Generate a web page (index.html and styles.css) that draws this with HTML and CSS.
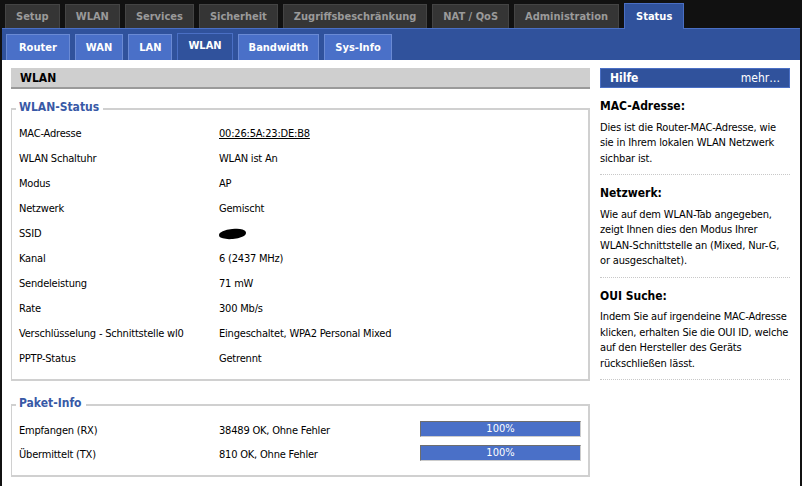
FILE: index.html
```html
<!DOCTYPE html>
<html>
<head>
  <title>Status - WLAN</title>
  <link rel="stylesheet" href="styles.css">
</head>

<body>
  <div class="page">
    <ul class="main-nav">
      <li>Setup</li>
      <li>WLAN</li>
      <li>Services</li>
      <li>Sicherheit</li>
      <li>Zugriffsbeschränkung</li>
      <li>NAT / QoS</li>
      <li>Administration</li>
      <li class="current">Status</li>
    </ul>

    <ul class="sub-nav">
      <li>Router</li>
      <li>WAN</li>
      <li>LAN</li>
      <li class="current">WLAN</li>
      <li>Bandwidth</li>
      <li>Sys-Info</li>
    </ul>

    <div class="content">
      <div class="main">
        <h2>WLAN</h2>

        <fieldset>
          <legend>WLAN-Status</legend>
          <div class="row"><span class="label">MAC-Adresse</span><span><a href="#">00:26:5A:23:DE:B8</a></span></div>
          <div class="row"><span class="label">WLAN Schaltuhr</span><span>WLAN ist An</span></div>
          <div class="row"><span class="label">Modus</span><span>AP</span></div>
          <div class="row"><span class="label">Netzwerk</span><span>Gemischt</span></div>
          <div class="row"><span class="label">SSID</span><span class="blot"></span></div>
          <div class="row"><span class="label">Kanal</span><span>6 (2437 MHz)</span></div>
          <div class="row"><span class="label">Sendeleistung</span><span>71 mW</span></div>
          <div class="row"><span class="label">Rate</span><span>300 Mb/s</span></div>
          <div class="row"><span class="label">Verschlüsselung - Schnittstelle wl0</span><span>Eingeschaltet, WPA2 Personal Mixed</span></div>
          <div class="row"><span class="label">PPTP-Status</span><span>Getrennt</span></div>
        </fieldset>

        <fieldset class="packets">
          <legend>Paket-Info</legend>
          <div class="row">
            <span class="label">Empfangen (RX)</span>
            <span class="count">38489 OK, Ohne Fehler</span>
            <span class="meter"><span class="bar" style="width: 100%">100%</span></span>
          </div>
          <div class="row">
            <span class="label">Übermittelt (TX)</span>
            <span class="count">810 OK, Ohne Fehler</span>
            <span class="meter"><span class="bar" style="width: 100%">100%</span></span>
          </div>
        </fieldset>
      </div>

      <div class="help">
        <div class="help-title">
          <span>Hilfe</span>
          <span class="more">mehr…</span>
        </div>

        <div class="help-item">
          <h4>MAC-Adresse:</h4>
          <p>Dies ist die Router-MAC-Adresse, wie sie in Ihrem lokalen WLAN Netzwerk sichbar ist.</p>
        </div>
        <div class="help-item">
          <h4>Netzwerk:</h4>
          <p>Wie auf dem WLAN-Tab angegeben, zeigt Ihnen dies den Modus Ihrer WLAN&#8209;Schnittstelle an (Mixed, Nur-G, or ausgeschaltet).</p>
        </div>
        <div class="help-item">
          <h4>OUI Suche:</h4>
          <p>Indem Sie auf irgendeine MAC-Adresse klicken, erhalten Sie die OUI ID, welche auf den Hersteller des Geräts rückschließen lässt.</p>
        </div>
      </div>
    </div>
  </div>
</body>
</html>
```

FILE: styles.css
```css
* {
  margin: 0;
  padding: 0;
  box-sizing: border-box;
}

body {
  background: #111;
  font-family: "DejaVu Sans Condensed", "DejaVu Sans", sans-serif;
  font-size: 11px;
  color: #000;
  overflow: hidden;
}

.page {
  margin: 0 2px;
  min-height: 486px;
  display: flex;
  flex-direction: column;
}

ul {
  list-style: none;
}

/* top level tabs */
.main-nav {
  flex-shrink: 0;
  display: flex;
  gap: 5px;
  padding: 4px 0 0 3px;
  height: 28px;
}

.main-nav li {
  height: 24px;
  padding: 0 10px;
  line-height: 24px;
  background: #353535;
  border: 1px solid #444;
  border-bottom: none;
  color: #9a9a9a;
  font-weight: bold;
  font-size: 11px;
}

.main-nav li.current {
  position: relative;
  z-index: 1;
  height: 26px;
  margin-top: -1px;
  padding: 0 11px;
  background: #30529c;
  border-color: #4a6fc4;
  color: #fff;
  line-height: 25px;
}

/* second level tabs */
.sub-nav {
  flex-shrink: 0;
  display: flex;
  align-items: flex-end;
  gap: 5px;
  height: 32px;
  padding-left: 4px;
  background: #30529c;
  border-top: 1px solid #4a6fc4;
}

.sub-nav li {
  height: 26px;
  padding: 0 10px;
  line-height: 26px;
  background: #4a70c8;
  border: 1px solid #6a8ad4;
  border-bottom: none;
  color: #fff;
  font-weight: bold;
  font-size: 11px;
}

.sub-nav li:first-child {
  padding: 0 12px;
}

.sub-nav li.current {
  height: 27px;
  line-height: 24px;
  background: #30529c;
  border-color: #4a6fc4;
}

.content {
  flex: 1;
  background: #fff;
  display: flex;
  gap: 10px;
  padding: 8px 0 0 9px;
}

.main {
  width: 579px;
}

h2 {
  height: 21px;
  padding-left: 9px;
  line-height: 20px;
  background: #cfcfcf;
  border-bottom: 2px solid #9a9a9a;
  font-size: 12px;
}

fieldset {
  margin-top: 11px;
  padding: 3px 7px 8px;
  border: 2px solid #d0d0d0;
  border-width: 2px 2px 2px 1px;
}

legend {
  margin-left: -3px;
  padding: 0 4px 4px 3px;
  color: #3859a6;
  font-weight: bold;
  font-size: 12px;
}

.row {
  display: flex;
  align-items: center;
  height: 25px;
  letter-spacing: -0.2px;
}

.row .label {
  width: 200px;
}

.row a {
  color: #000;
}

.blot {
  display: inline-block;
  width: 27px;
  height: 10px;
  background: #000;
  border-radius: 50% 40% 50% 45%;
  transform: rotate(-4deg);
}

.packets {
  margin-top: 15px;
  padding-top: 4px;
  padding-bottom: 9px;
}

.packets .row {
  height: 24px;
}

.packets .count {
  width: 201px;
}

.meter {
  align-self: flex-start;
  margin-top: 3px;
  width: 161px;
  height: 16px;
  background: #eee;
  border: 1px solid #ccc;
  border-top-color: #6e6e6e;
  border-left-color: #6e6e6e;
  letter-spacing: 0;
}

.bar {
  display: block;
  height: 100%;
  background: #4a70c8;
  color: #fff;
  text-align: center;
  line-height: 14px;
}

/* help column */
.help {
  width: 190px;
}

.help-title {
  display: flex;
  justify-content: space-between;
  height: 20px;
  padding: 0 9px;
  background: #30529c;
  border: 1px solid #4a6fc4;
  color: #fff;
  line-height: 18px;
  font-size: 12px;
}

.help-title span:first-child {
  font-weight: bold;
}

.help-item {
  padding: 11px 0 8px;
  border-bottom: 1px dotted #c8c8c8;
  line-height: 15.5px;
}

.help-item p {
  letter-spacing: -0.15px;
}

.help-item h4 {
  margin-bottom: 5px;
  font-size: 12px;
}
```
